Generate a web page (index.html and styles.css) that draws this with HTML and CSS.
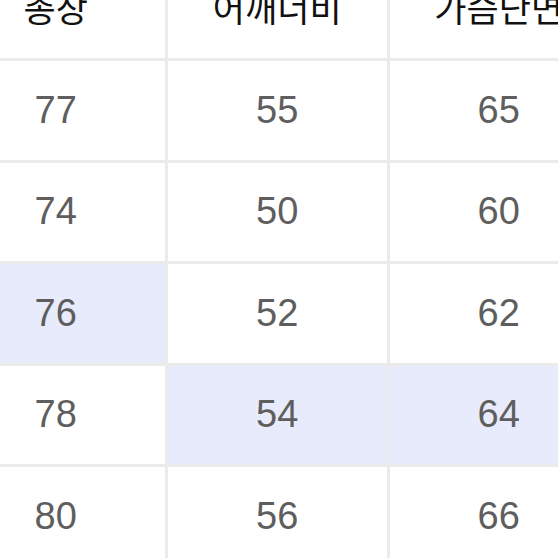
FILE: index.html
```html
<!DOCTYPE html>
<html lang="ko">
<head>
<meta charset="utf-8">
<link rel="stylesheet" href="styles.css">
</head>
<body>
<div class="viewport">
  <div class="table">
    <div class="cell head">총장</div>
    <div class="cell head">어깨너비</div>
    <div class="cell head">가슴단면</div>
    <div class="cell head">소매길이</div>

    <div class="cell">77</div>
    <div class="cell">55</div>
    <div class="cell">65</div>
    <div class="cell">60</div>

    <div class="cell">74</div>
    <div class="cell">50</div>
    <div class="cell">60</div>
    <div class="cell">58</div>

    <div class="cell hl">76</div>
    <div class="cell">52</div>
    <div class="cell">62</div>
    <div class="cell">59</div>

    <div class="cell">78</div>
    <div class="cell hl">54</div>
    <div class="cell hl">64</div>
    <div class="cell">61</div>

    <div class="cell">80</div>
    <div class="cell">56</div>
    <div class="cell">66</div>
    <div class="cell">62</div>
  </div>
</div>
</body>
</html>
```
FILE: styles.css
```css
html, body {
  margin: 0;
  padding: 0;
  background: #ffffff;
}
.viewport {
  width: 558px;
  height: 558px;
  overflow: hidden;
}
.table {
  display: grid;
  grid-template-columns: repeat(4, 218.5px);
  grid-auto-rows: 98.5px;
  gap: 3px;
  background: #ebebeb;
  margin-left: -53.5px;
  margin-top: -40.5px;
  width: max-content;
}
.cell {
  background: #ffffff;
  display: flex;
  align-items: center;
  justify-content: center;
  font-family: "Liberation Sans", Arial, "Noto Sans CJK KR", sans-serif;
  font-size: 38px;
  color: #5e5e5e;
}
.cell.head {
  font-family: "Noto Sans CJK KR", sans-serif;
  font-size: 35px;
  color: #111111;
  padding-bottom: 4px;
}
.cell.hl {
  background: #e8ebfb;
}
```
